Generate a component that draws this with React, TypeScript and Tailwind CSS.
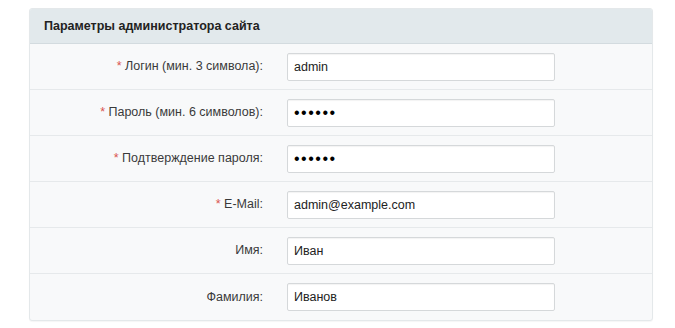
const FIELDS = [
  { label: 'Логин (мин. 3 символа):', value: 'admin', required: true, secret: false },
  { label: 'Пароль (мин. 6 символов):', value: '••••••', required: true, secret: true },
  { label: 'Подтверждение пароля:', value: '••••••', required: true, secret: true },
  { label: 'E-Mail:', value: 'admin@example.com', required: true, secret: false },
  { label: 'Имя:', value: 'Иван', required: false, secret: false },
  { label: 'Фамилия:', value: 'Иванов', required: false, secret: false }];

export default function App() {
  return (
    <div className="min-h-[328px] w-[675px] bg-white pl-[29px] pt-[8px] font-['Liberation_Sans',Arial,sans-serif]">
      <div className="w-[624px] overflow-hidden rounded-[3px] border border-[#e4e8ea] bg-[#f8f9fa] shadow-[0_1px_1px_rgba(0,0,0,0.04)]">
        <div className="flex h-[35px] items-center border-b border-[#d3dbdf] bg-[#e2e9ec] pl-[14px] text-[12.5px] font-bold text-[#222]">
          Параметры администратора сайта
        </div>
        {FIELDS.map((f, i) => (
          <div
            key={f.label}
            className={
              'flex h-[46px] items-center ' +
              (i < FIELDS.length - 1 ? 'border-b border-[#e6e9eb]' : '')
            }>
            <div className="w-[233px] text-right text-[12.5px] text-[#3a3a3a]">
              {f.required && <span className="text-[#d9534f]">* </span>}
              {f.label}
            </div>
            <input
              type="text"
              defaultValue={f.value}
              readOnly
              className={
                'ml-[24px] h-[28px] w-[268px] rounded-[2px] border border-[#d5d8da] bg-white px-[6px] text-[#222] outline-none shadow-[inset_0_1px_1px_rgba(0,0,0,0.05)] ' +
                (f.secret ? 'text-[16px] tracking-[1.5px] text-black' : 'text-[12.5px]')
              } />
          </div>
        ))}
      </div>
    </div>);

}
